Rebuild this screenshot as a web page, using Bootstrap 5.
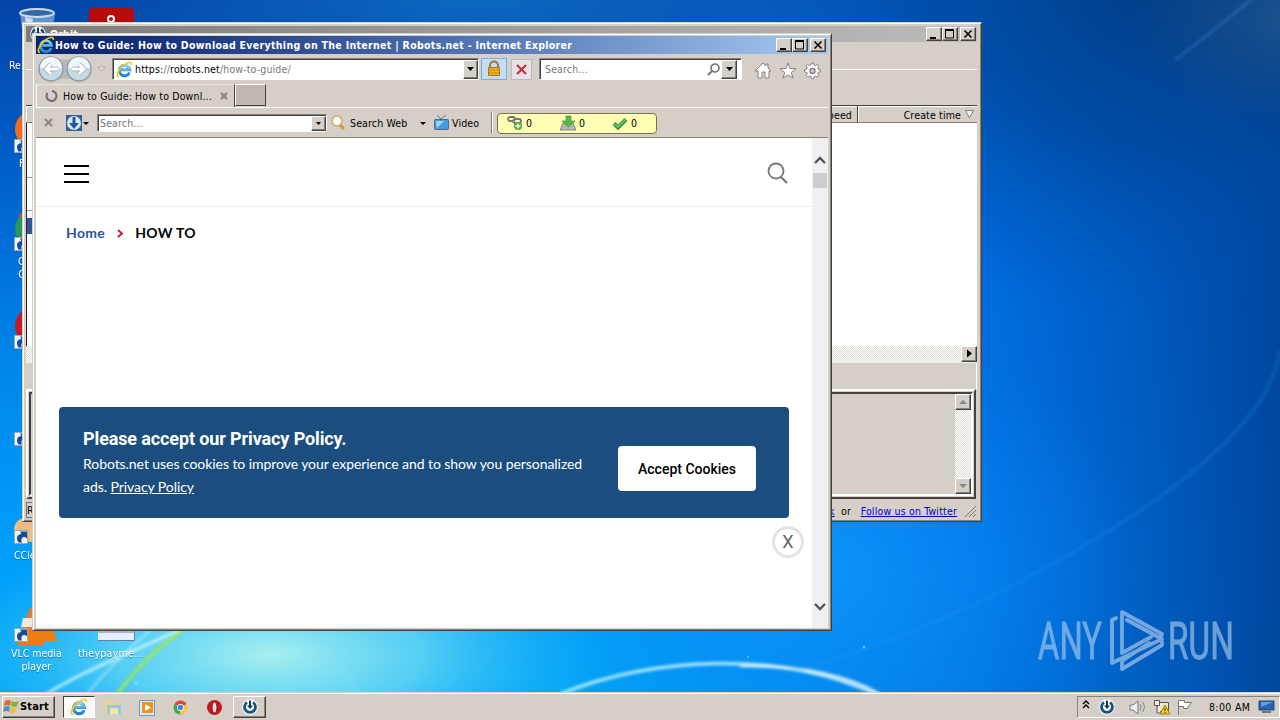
<!DOCTYPE html>
<html lang="en">
<head>
<meta charset="utf-8">
<meta name="viewport" content="width=device-width, initial-scale=1">
<title>Desktop</title>
<link href="https://cdn.jsdelivr.net/npm/bootstrap@5.3.0/dist/css/bootstrap.min.css" rel="stylesheet">
<style>
:root{--face:#d5cfc8;--dark:#44413e;--mid:#85817b}
body{width:1280px;height:720px;overflow:hidden;font:10.5px/14px "DejaVu Sans Condensed","DejaVu Sans",sans-serif;letter-spacing:.15px;color:#000;background:#0878e0}
svg{display:block;flex:none}
.wallpaper{inset:0;width:1280px;height:720px}
.desk-label{color:#fff;line-height:13px;text-align:center;white-space:nowrap;letter-spacing:0;text-shadow:0 1px 1px #0358}
.win{background:var(--face);border:1px solid;border-color:var(--face) var(--dark) var(--dark) var(--face);box-shadow:inset 1px 1px #fff,inset -1px -1px var(--mid);padding:3px}
.raised{background:var(--face);border:1px solid;border-color:#fff var(--dark) var(--dark) #fff;box-shadow:inset -1px -1px var(--mid)}
.field{background:#fff;border:1px solid;border-color:var(--mid) #fff #fff var(--mid);box-shadow:inset 1px 1px var(--dark)}
.fixed-part{flex:none}
.win-btn{width:16px;height:14px;flex:none}
.win-btn svg{margin:1px 0 0 2px}
/* download manager window */
#orbit{left:22px;top:22px;width:960px;height:500px;padding-right:4px}
#orbit .titlebar{height:16px;background:linear-gradient(90deg,#7e7c7a,#bebcba)}
#orbit .menu-strip{height:28px;border-bottom:1px solid #fff}
#orbit .tool-strip{height:35px}
.list-head{height:18px;border-top:1px solid var(--dark)}
.list-head>div{border-right:1px solid var(--dark);border-bottom:1px solid var(--mid);box-shadow:inset 1px 1px #fff;line-height:18px;text-align:right}
.list-head>div:last-child{border-right:0}
.dither{background:repeating-conic-gradient(#fff 0 25%,#dedbd4 0 50%) 0 0/2px 2px}
.inset-panel{height:110px;border:2px solid;border-color:#fff var(--dark) var(--dark) #fff;padding:1px;margin-right:1px}
.inset-panel>div{border:2px solid;border-color:var(--dark) #fff #fff var(--dark)}
#orbit a{color:#0000c8}
/* browser window */
#browser{left:32px;top:33px;width:800px;height:598px;padding:2px 3px 2px 3px}
#browser .titlebar{height:18px;background:linear-gradient(90deg,#0b246a 0%,#16307a 15%,#5a7cb8 60%,#a6caf0 100%);color:#fff;font-weight:700;line-height:18px;letter-spacing:.31px}
.navrow{height:30px}
.tabrow{height:24px;border-bottom:1px solid #fff}
.toolrow{height:30px;border-bottom:1px solid var(--mid);padding-top:1px}
.muted-txt{color:#777}
.page-tab{width:199px;height:23px;border-left:1px solid #fff;border-top:1px solid #e9e5df;border-right:1px solid var(--dark)}
.new-tab{width:31px;height:22px;background:#bfb8b2;border:1px solid;border-color:#fff var(--dark) var(--dark) #fff}
.lock-btn{width:26px;height:22px;background:#c5dcf6;border:1px solid #7badde}
.stop-btn{width:21px;height:21px;background:#e6e2e6;border:1px solid #bcb7bb}
.counter{width:160px;height:21px;background:#ffffb4;border:1px solid #777548;border-radius:4px}
.page{background:#fff;font-family:Lato,"Liberation Sans",sans-serif}
.site-head{height:69px;border-bottom:1px solid #ebebeb}
.burger{width:25px;height:18px;border-top:2px solid #000;border-bottom:2px solid #000}
.burger::before{content:"";display:block;height:2px;background:#000;margin-top:6px}
.crumbs{font-weight:700;font-size:14px;line-height:20px;letter-spacing:.33px}
.cookie{left:23px;top:269px;width:730px;height:111px;background:#1b4e7e;border-radius:4px;color:#fff}
.cookie h2{font:700 18px/22px Roboto,sans-serif;letter-spacing:-.12px}
.cookie p{font-size:14px;line-height:23px;letter-spacing:-.062px}
.accept{width:138px;height:45px;background:#fff;border:0;border-radius:4px;font:500 14px/20px Roboto,sans-serif;letter-spacing:0;color:#000}
.close-ad{left:736px;top:388px;width:32px;height:32px;border:3px solid #e2e3e4;background:#fff;color:#666;font:18px/26px Roboto,sans-serif;text-align:center}
.vscroll{width:16px;background:#f0f0f0}
.thumb{width:14px;height:15px;background:#cdcdcd}
/* taskbar */
.taskbar{left:0;top:692px;width:1280px;height:28px;background:var(--face);border-top:1px solid var(--face);box-shadow:inset 0 1px #fff}
.start{width:53px;height:22px;font-weight:700;font-size:11px}
.active-task{width:32px;height:22px;background:#fbfaf9;border:1px solid;border-color:var(--dark) #fff #fff var(--dark)}
.tray{width:203px;height:22px;border:1px solid;border-color:var(--mid) #fff #fff var(--mid)}
</style>
</head>
<body class="position-relative">
<svg width="0" height="0" class="position-absolute">
<defs>
<linearGradient id="eg" x2="0" y2="1"><stop stop-color="#8fd8fa"/><stop offset="1" stop-color="#1782d0"/></linearGradient>
<symbol id="ie" viewBox="0 0 18 18"><path d="M14.200 12.200A5.500 5.500 0 1 1 14.500 9.400H5.500" fill="none" stroke="#2a7fc4" stroke-width="3"/><path d="M14.200 12.200A5.500 5.500 0 1 1 14.500 9.400H5.500" fill="none" stroke="url(#eg)" stroke-width="2.200"/><path d="M3.200 16.300C-.8 16.600 2 9.600 7 5.200c4.500-4 10-5.400 9.300-1.200" fill="none" stroke="#f0c81c" stroke-width="1.700"/></symbol>
<symbol id="orb" viewBox="0 0 16 16"><circle cx="8" cy="8" r="7.700" fill="#fff"/><path d="M5 3.300a5.500 5.500 0 1 0 6 0" fill="none" stroke="#14557e" stroke-width="2.800"/><path d="M7 1.500h2v5h2L8 10 5 6.500h2z" fill="#133b5c"/></symbol>
<symbol id="dn" viewBox="0 0 7 4"><path d="M0 0h7L3.500 4z"/></symbol>
<symbol id="wmin" viewBox="0 0 10 10"><path d="M1 8h6v2H1z"/></symbol>
<symbol id="wmax" viewBox="0 0 10 10"><path d="M.5 1h8v8h-8z" fill="none" stroke="#000"/><path d="M0 0h9v2H0z"/></symbol>
<symbol id="wx" viewBox="0 0 10 10"><path d="M1.500 1.500l7 7m0-7l-7 7" stroke="#000" stroke-width="1.600"/></symbol>
<symbol id="cut" viewBox="0 0 14 14"><path fill="#eef5fb" stroke="#9aa9b8" d="M.5.5h13v13H.5z"/><path d="M4.500 12.500C1.500 8 3.500 4 7.500 4L6 1.500h7v7L11 7C8 6.500 6.500 9 8 12.500z" fill="#164a9a"/></symbol>
<symbol id="bigcirc" viewBox="0 0 26 26"><circle cx="13" cy="13" r="12" fill="#c4dbe6" stroke="#8d9aa3" stroke-width="1.400"/><path d="M2 12a11 11 0 0 1 22 0z" fill="#f0f6f9"/></symbol>
<symbol id="chrome" viewBox="0 0 16 16"><circle cx="8" cy="8" r="6.500" fill="#fbc43a"/><path d="M8 8L2.400 4.700A6.500 6.500 0 0 1 13.600 4.700z" fill="#df4436"/><path d="M8 8L2.400 4.700A6.500 6.500 0 0 0 7.300 14.500z" fill="#35a854"/><circle cx="8" cy="8" r="3.300" fill="#fff"/><circle cx="8" cy="8" r="2.500" fill="#4285e8"/></symbol>
</defs>
</svg>

<svg class="wallpaper position-absolute" viewBox="0 0 1280 720" aria-hidden="true">
<defs>
<linearGradient id="sky" x2="0" y2="1"><stop stop-color="#0444a8"/><stop offset=".25" stop-color="#0062cc"/><stop offset=".5" stop-color="#0085e9"/><stop offset=".75" stop-color="#009dfb"/><stop offset="1" stop-color="#00a9f3"/></linearGradient>
<linearGradient id="east"><stop offset=".45" stop-color="#0070e8" stop-opacity="0"/><stop offset=".78" stop-color="#0068dc" stop-opacity=".82"/><stop offset="1" stop-color="#00439a" stop-opacity=".95"/></linearGradient>
<radialGradient id="night" gradientUnits="userSpaceOnUse" cx="1160" cy="-20" r="460" gradientTransform="translate(1160 -20) scale(1 .72) translate(-1160 20)"><stop stop-color="#003c84" stop-opacity=".95"/><stop offset=".5" stop-color="#004596" stop-opacity=".65"/><stop offset="1" stop-color="#0054b4" stop-opacity="0"/></radialGradient>
<radialGradient id="topglow"><stop stop-color="#0c69c0"/><stop offset="1" stop-color="#0c69c0" stop-opacity="0"/></radialGradient>
<radialGradient id="corner"><stop stop-color="#24568a" stop-opacity=".8"/><stop offset="1" stop-color="#1c4c80" stop-opacity="0"/></radialGradient>
<radialGradient id="center"><stop stop-color="#1098ff" stop-opacity=".75"/><stop offset="1" stop-color="#0884f8" stop-opacity="0"/></radialGradient>
<radialGradient id="glow"><stop stop-color="#a8f0ee"/><stop offset=".45" stop-color="#70dcf3" stop-opacity=".75"/><stop offset="1" stop-color="#20b8ff" stop-opacity="0"/></radialGradient>
<filter id="soft"><feGaussianBlur stdDeviation="1.500"/></filter>
</defs>
<path fill="url(#sky)" d="M0 0h1280v720H0z"/><path fill="url(#east)" d="M0 0h1280v720H0z"/><path fill="url(#night)" d="M600 0h680v340H600z"/>
<ellipse cx="480" cy="0" rx="430" ry="100" fill="url(#topglow)"/>
<ellipse cx="1290" cy="20" rx="160" ry="110" fill="url(#corner)"/>
<ellipse cx="820" cy="570" rx="340" ry="240" fill="url(#center)"/>
<ellipse cx="270" cy="655" rx="340" ry="130" fill="url(#glow)"/>
<g fill="none" filter="url(#soft)">
<path d="M30 705C75 672 130 655 210 615" stroke="#d8fbff" stroke-width="3" opacity=".8"/>
<path d="M82 700Q110 665 150 630" stroke="#c5f6ff" stroke-width="2" opacity=".6"/>
<path d="M116 696Q145 655 190 625" stroke="#a0e84a" stroke-width="3"/>
<path d="M560 694C650 658 780 648 880 696" stroke="#c5f2ff" stroke-width="3.500" opacity=".85"/>
<path d="M740 666Q830 665 880 694" stroke="#fff" stroke-width="2.500" opacity=".8"/>
<path d="M790 672Q950 630 1110 530T1280 350" stroke="#2794f5" stroke-width="5" opacity=".18"/>
<path d="M1175 60Q1215 30 1258 -6" stroke="#4a8ed8" stroke-width="2.500" opacity=".35"/>
</g>
<circle cx="315" cy="705" r="48" fill="#8ce5ff" opacity=".15"/>
<g fill="#a0e7ff" opacity=".6"><circle cx="136" cy="683" r="1.500"/><circle cx="864" cy="647" r="1.500"/><circle cx="748" cy="657" r="1"/></g>
<!-- watermark -->
<g fill="#a5c6ec" opacity=".67" stroke="#a5c6ec" stroke-width=".9" font-family="Roboto,sans-serif" font-size="51" font-weight="400"><text x="1038" y="659" textLength="64" lengthAdjust="spacingAndGlyphs">ANY</text><text x="1168" y="659" textLength="66" lengthAdjust="spacingAndGlyphs">RUN</text></g>
<g fill="none" stroke="#a5c6ec" stroke-width="3.800" stroke-linejoin="round" stroke-linecap="round" opacity=".7"><path d="M1122 653V612L1162 634L1160 638L1127 620M1122 653L1151 637"/><path d="M1116 618L1112 620V663L1162 639L1160 636M1149 643L1122 661V669L1162 645V642"/></g>
</svg>

<!-- desktop icons -->
<svg class="position-absolute" style="left:18px;top:8px" width="40" height="50"><path d="M2 5l5 40h25l5-40z" fill="#7aa7d8" opacity=".8"/><path d="M7 9l3 32 5-30z" fill="#c7dff5"/><ellipse cx="19" cy="5" rx="17" ry="4" fill="#3267a8" stroke="#ccdbe6" stroke-width="2"/></svg>
<svg class="position-absolute" style="left:89px;top:8px" width="45" height="30"><rect width="45" height="40" rx="4" fill="#b70c0c"/><circle cx="22" cy="11" r="3" fill="none" stroke="#fff" stroke-width="2"/></svg>
<svg class="position-absolute" style="left:14px;top:108px" width="30" height="545"><circle cx="19" cy="21" r="18" fill="#f36b21"/><circle cx="19" cy="20" r="10" fill="#df3a2d"/><circle cx="20" cy="121" r="19" fill="#289a55"/><path d="M4 108q10-10 20-6v12z" fill="#df4a2d"/><circle cx="20" cy="218" r="19" fill="#c91a24"/><ellipse cx="18" cy="421" rx="18" ry="13" fill="#edbb83"/><path d="M7 525L16 500h14v38H3z" fill="#e9792a"/><path d="M9 510h20v9H7z" fill="#f4e9df"/>
<use href="#cut" x="0" y="31" width="14" height="14"/><use href="#cut" x="0" y="129" width="14" height="14"/><use href="#cut" x="0" y="227" width="14" height="14"/><use href="#cut" x="0" y="324" width="14" height="14"/></svg>
<svg class="position-absolute" style="left:14px;top:628px" width="130" height="16"><path d="M14 0h25l4 13H14z" fill="#ee7d14"/><path d="M84 0h37v13H84z" fill="#e6eef9"/><path d="M84 4h36M84 12.500h36.500V0" fill="none" stroke="#687f9f"/></svg>
<svg class="position-absolute" style="left:14px;top:530px" width="14" height="113"><use href="#cut" width="14" height="14"/><use href="#cut" y="98" width="14" height="14"/></svg>
<div class="desk-label position-absolute" style="left:9px;top:59px">Re</div>
<div class="desk-label position-absolute" style="left:19px;top:157px">F</div>
<div class="desk-label position-absolute" style="left:18px;top:255px">G<br>C</div>
<div class="desk-label position-absolute" style="left:14px;top:549px">CCle</div>
<div class="desk-label position-absolute" style="left:11px;top:647px">VLC media<br>player</div>
<div class="desk-label position-absolute" style="left:78px;top:647px;letter-spacing:.3px">theypayme...</div>

<!-- download manager -->
<section id="orbit" class="win position-absolute d-flex flex-column">
 <div class="titlebar fixed-part d-flex align-items-center" style="padding-right:1px">
  <svg width="16" height="16" class="ms-1"><use href="#orb"/></svg><span class="text-white fw-bold ms-1">Orbit</span>
  <div class="raised win-btn ms-auto"><svg width="10" height="10"><use href="#wmin"/></svg></div>
  <div class="raised win-btn"><svg width="10" height="10"><use href="#wmax"/></svg></div>
  <div class="raised win-btn" style="margin-left:2px"><svg width="10" height="10"><use href="#wx"/></svg></div>
 </div>
 <div class="menu-strip fixed-part"></div><div class="tool-strip fixed-part"></div>
 <div class="list-head fixed-part d-flex"><div class="flex-grow-1" style="padding-right:5px">Speed</div><div class="d-flex justify-content-end" style="width:119px">Create time<svg class="ms-1 mt-1" style="margin-right:3px" width="9" height="9"><path d="M.5.5h8L4.500 8z" fill="#eee" stroke="#88847f"/></svg></div></div>
 <div class="bg-white fixed-part d-flex border-start border-dark" style="height:223px"><div style="width:8px;height:34px;margin-top:54px;border:1px solid #999;border-left:0"></div><div style="width:7px;height:16px;margin:95px 0 0 -8px;background:#32559a"></div></div>
 <div class="dither fixed-part d-flex justify-content-end" style="height:17px"><div class="raised" style="width:16px;height:16px"><svg width="13" height="13"><path d="M5 2.500l5 4-5 4z"/></svg></div></div>
 <div class="fixed-part border-end border-white" style="height:26px"></div>
 <div class="inset-panel fixed-part d-flex"><div class="flex-grow-1 d-flex justify-content-end">
  <div class="dither d-flex flex-column justify-content-between"><div class="raised" style="width:16px;height:16px"><svg width="14" height="14"><path d="M3 9h8L7 5z" fill="#888"/></svg></div><div class="raised" style="width:16px;height:16px"><svg width="14" height="14"><path d="M3 5h8L7 9z" fill="#888"/></svg></div></div>
 </div></div>
 <div class="flex-grow-1 d-flex align-items-end" style="line-height:14px"><span class="border border-secondary bg-transparent">R</span>
 <span class="ms-auto text-nowrap" style="letter-spacing:.18px"><a href="#">k</a>&nbsp; or &nbsp; <a href="#">Follow us on Twitter</a></span><svg style="margin-left:7px" width="13" height="13"><path d="M1 12L12 1M5 12l7-7M9 12l3-3" stroke="#7d7974"/></svg></div>
</section>

<!-- Internet Explorer -->
<main id="browser" class="win position-absolute d-flex flex-column">
 <div class="titlebar fixed-part d-flex align-items-center text-nowrap">
  <svg width="18" height="18" style="margin:0 0 0 1px"><use href="#ie"/></svg><span>How to Guide: How to Download Everything on The Internet | Robots.net - Internet Explorer</span>
  <div class="raised win-btn ms-auto"><svg width="10" height="10"><use href="#wmin"/></svg></div>
  <div class="raised win-btn"><svg width="10" height="10"><use href="#wmax"/></svg></div>
  <div class="raised win-btn" style="margin:0 2px 0 2px"><svg width="10" height="10"><use href="#wx"/></svg></div>
 </div>
 <div class="navrow fixed-part d-flex align-items-center">
  <svg width="74" height="28" style="margin-left:2px"><path d="M13 2Q27 7 41 2v24Q27 21 13 26z" fill="#b9b9b7"/><use href="#bigcirc" width="26" height="26" y="1"/><use href="#bigcirc" x="28" y="1" width="26" height="26"/><path d="M20 14H8m5-5l-5 5 5 5M34 14h12m-5-5l5 5-5 5" stroke="#93a5b2" stroke-width="4.500" fill="none"/><path d="M20 14H8m5-5l-5 5 5 5M34 14h12m-5-5l5 5-5 5" stroke="#fff" stroke-width="3" fill="none"/><path d="M60 12h7l-3.500 4z" fill="#eee" stroke="#a8a5a0"/></svg>
  <div class="field d-flex align-items-center fixed-part ps-1" style="width:367px;height:22px"><svg width="17" height="17" style="margin-left:-1px"><use href="#ie"/></svg><span style="margin-left:2px">https:<span class="muted-txt">//</span>robots.net<span class="muted-txt">/how-to-guide/</span></span><div class="raised ms-auto d-flex align-items-center justify-content-center" style="width:15px;height:19px"><svg width="7" height="4"><use href="#dn"/></svg></div></div>
  <div class="lock-btn fixed-part" style="margin-left:2px"><svg width="24" height="20"><path d="M8 9V6.500a4 4 0 0 1 8 0V9" fill="none" stroke="#9d782a" stroke-width="2"/><path d="M6.500 8.500h11v8h-11z" fill="#f0b526" stroke="#a87410"/><path d="M7 11h10M7 14h10" stroke="#bd8312"/></svg></div>
  <div class="stop-btn fixed-part" style="margin-left:4px"><svg width="19" height="19"><path d="M5 5l9 9m0-9l-9 9" stroke="#c92d35" stroke-width="2"/></svg></div>
  <div class="field d-flex align-items-center fixed-part" style="width:203px;height:22px;margin-left:7px;padding-left:5px"><span class="muted-txt">Search...</span><svg class="ms-auto" width="15" height="15"><circle cx="9" cy="6" r="4" fill="none" stroke="#777" stroke-width="1.700"/><path d="M6 9l-4 4" stroke="#777" stroke-width="2"/></svg><div class="raised d-flex align-items-center justify-content-center me-1" style="width:16px;height:19px"><svg width="7" height="4"><use href="#dn"/></svg></div></div>
  <svg width="74" height="22" style="margin-left:11px;margin-top:3px"><g fill="#fdfdfd" stroke="#85817e"><path d="M2 11l8-8 3 3V4h2v4l3 3h-2v7h-4v-6H9v6H5v-7z"/><path d="M35 3l2 5.500 6 .2-4.700 3.800 1.600 5.500L35 15l-5 3 1.700-5.500L27 8.700l6-.2z"/><path d="M58.500 3h2l.5 2 1.500.6 1.900-1.100 1.400 1.400-1.100 1.900.6 1.500 2.200.5v2l-2.200.5-.6 1.500 1.100 1.900-1.400 1.400-1.900-1.100-1.500.6-.5 2.200h-2l-.5-2.200-1.500-.6-1.900 1.100-1.400-1.400 1.100-1.900-.6-1.500-2.200-.5v-2l2.200-.5.600-1.500-1.100-1.900 1.400-1.400 1.900 1.100 1.500-.6z"/><circle cx="59.500" cy="11" r="2.500" fill="#d4d0cb" stroke-width="1.400"/></g></svg>
 </div>
 <div class="tabrow fixed-part d-flex">
  <div class="page-tab d-flex align-items-center text-nowrap"><svg width="14" height="14" style="margin-left:8px;margin-right:4px"><path d="M2.500 4A5 5 0 1 0 7 2" stroke="#6f6c69" stroke-width="2" fill="none"/></svg><span>How to Guide: How to Downl...</span><svg width="10" height="10" class="ms-auto" style="margin-right:5px"><path d="M2 2l6 6m0-6L2 8" stroke="#85817c" stroke-width="2"/></svg></div><div class="new-tab"></div>
 </div>
 <div class="toolrow fixed-part d-flex align-items-center">
  <svg width="60" height="20"><path d="M9 6l7 7m0-7l-7 7" stroke="#8a8681" stroke-width="2"/><path d="M30 2h16v16H30z" fill="#35608f"/><circle cx="38" cy="10" r="7" fill="#d9e9f8"/><path d="M36.500 4h3v6H43l-5 6-5-6h3.500z" fill="#22589a"/><path d="M47 9h6l-3 3z"/></svg>
  <div class="field d-flex align-items-center ps-1" style="width:230px;height:18px;margin-left:1px"><span class="muted-txt" style="margin-left:-2px">Search...</span><div class="raised ms-auto d-flex align-items-center justify-content-center" style="width:15px;height:15px"><svg width="5" height="3"><use href="#dn"/></svg></div></div>
  <svg width="18" height="18" style="margin-left:3px"><path d="M9 10l5 5" stroke="#d69438" stroke-width="3"/><circle cx="7" cy="7" r="5" fill="#fffbe6" stroke="#c9a875" stroke-width="1.500"/></svg><span class="text-nowrap" style="margin-left:2px;width:70px">Search Web</span>
  <svg width="31" height="20"><path d="M0 9h6l-3 3z"/><path d="M17 2l4 4 5-4" stroke="#65737c" fill="none"/><rect x="14.500" y="6.500" width="14" height="10" rx="1" fill="#449de0" stroke="#556979"/><path d="M16 8h8l-7 7z" fill="#9cd7fc"/></svg><span style="margin-left:1px;width:39px">Video</span>
  <div class="fixed-part" style="width:2px;height:22px;border-left:1px solid #85817b;border-right:1px solid #fff"></div>
  <div class="counter d-flex align-items-center fixed-part ms-1"><svg width="17" height="16" style="margin-left:9px"><g fill="none" stroke="#777" stroke-width="1.800"><rect x="1" y="2" width="7" height="4" rx="2"/><rect x="6" y="4" width="8" height="4" rx="2"/></g><circle cx="11" cy="11" r="4" fill="#54a544"/><path d="M11 8.500v5M8.500 11h5" stroke="#fff" stroke-width="1.500"/></svg><span style="margin-left:2px;width:34px">0</span><svg width="17" height="17"><path d="M3 8L0 15h16l-3-7z" fill="#b4b6b0" stroke="#888"/><path d="M6 1h5v5h4l-6.500 6L2 6h4z" fill="#5cb84f" stroke="#3b8a38" stroke-width=".6"/></svg><span style="margin-left:2px;width:33px">0</span><svg width="16" height="16"><path d="M2 8.500l4 4 8-8" stroke="#348e40" stroke-width="4" fill="none"/><path d="M2.500 9l3.500 3 7.500-7.500" stroke="#63c263" stroke-width="2" fill="none"/></svg><span style="margin-left:3px">0</span></div>
 </div>
 <div class="page flex-grow-1 d-flex position-relative">
  <div class="flex-grow-1">
   <header class="site-head d-flex align-items-center justify-content-between" style="padding:3px 22px 0 28px"><div class="burger"></div><svg width="24" height="24"><circle cx="10" cy="9" r="7.500" fill="none" stroke="#777" stroke-width="1.800"/><path d="M15 15l6 6" stroke="#777" stroke-width="2"/></svg></header>
   <nav class="crumbs d-flex align-items-center" style="padding:16px 0 0 30px"><span style="color:#2b52a0">Home</span><svg width="7" height="9" style="margin:1px 11px 0 12px"><path d="M1 1l4 3.500L1 8" fill="none" stroke="#c3122f" stroke-width="1.800"/></svg><span>HOW TO</span></nav>
  </div>
  <div class="vscroll d-flex flex-column align-items-center"><svg width="12" height="9" style="margin:18px 0 8px"><path d="M1 7l5-5 5 5" fill="none" stroke="#555" stroke-width="2.400"/></svg><div class="thumb"></div><svg class="mt-auto" width="12" height="9" style="margin-bottom:17px"><path d="M1 2l5 5 5-5" fill="none" stroke="#555" stroke-width="2.400"/></svg></div>
  <aside class="cookie position-absolute d-flex align-items-center justify-content-between" style="padding:1px 33px 0 24px"><div><h2 class="mb-0">Please accept our Privacy Policy.</h2><p class="mb-0" style="padding-top:2px">Robots.net uses cookies to improve your experience and to show you personalized<br>ads. <a href="#" class="text-white">Privacy Policy</a></p></div><button class="accept fixed-part p-0" style="margin-top:11px">Accept Cookies</button></aside>
  <div class="close-ad position-absolute rounded-circle">X</div>
 </div>
</main>

<!-- taskbar -->
<footer class="taskbar position-absolute d-flex align-items-center">
 <div class="raised start d-flex align-items-center" style="margin-left:2px"><svg width="17" height="17"><path d="M2 3q3-2 6 0L7 8Q4 6 1 8z" fill="#e36532"/><path d="M9 3q3 2 7 0l-2 5q-3 2-6 0z" fill="#78b63c"/><path d="M1 9q3-2 6 0l-1 5q-3-2-6 0z" fill="#4a91d1"/><path d="M8 9q3 2 6 0l-2 5q-3 2-6 0z" fill="#efbd34"/></svg>Start</div>
 <div class="active-task d-flex align-items-center justify-content-center ms-2"><svg width="18" height="18"><use href="#ie"/></svg></div>
 <svg width="130" height="20" style="margin-left:8px"><path d="M2 4h6l2 2h6v11H2z" fill="#eed484"/><path d="M4 8h14v9H4z" fill="#93cbdc"/><path d="M7 11h8v6H7z" fill="#f4e4a5"/><path d="M36.500 3.500h15v15h-15z" fill="#d9edff" stroke="#659bd0"/><path d="M39 5h11v11H39z" fill="#f3911d"/><path d="M42 7l6 3.500-6 3.500z" fill="#fff"/><use href="#chrome" x="69" y="2" width="17" height="17"/><ellipse cx="111.500" cy="10.500" rx="7.500" ry="7.500" fill="#c51520"/><ellipse cx="111.500" cy="10.500" rx="2.500" ry="5.500" fill="#ddd" stroke="#89101a"/></svg>
 <div class="raised d-flex align-items-center justify-content-center" style="width:33px;height:22px"><svg width="16" height="16"><use href="#orb"/></svg></div>
 <div class="tray d-flex align-items-center ms-auto"><svg width="127" height="20"><path d="M5 7l3-3 3 3M5 11l3-3 3 3" stroke="#000" fill="none" stroke-width="1.300"/><use href="#orb" x="21" y="2" width="16" height="16"/><path d="M52 8h3l5-4v13l-5-4h-3z" fill="#eee" stroke="#777"/><path d="M62 7q2 3 0 7M65 5q3 5 0 10" fill="none" stroke="#888"/><path d="M79.500 5.500h11v9h-11z" fill="#eceac8" stroke="#555"/><path d="M76.500 3.500h5v5h-5zM79 9v7h4" fill="#eee" stroke="#555"/><path d="M87 8l5 9H82z" fill="#f3ce26" stroke="#a67b13"/><path d="M87 11v3m0 1v1" stroke="#222"/><path d="M100.500 18V3.500h6v2h7l-3 3.500-1 2.500h-4v-2h-5" fill="#fff" stroke="#777"/></svg><span class="text-nowrap" style="margin-left:4px;letter-spacing:.35px">8:00 AM</span><svg width="17" height="17" class="ms-auto me-1"><path d="M1 3h15v9H1z" fill="#2463b8" stroke="#26476d"/><path d="M3 4h12L3 9z" fill="#5ba0e0"/><path d="M4 13h9v2H4z" fill="#777"/></svg></div>
</footer>
<script src="https://cdn.jsdelivr.net/npm/bootstrap@5.3.0/dist/js/bootstrap.bundle.min.js"></script>
</body>
</html>
